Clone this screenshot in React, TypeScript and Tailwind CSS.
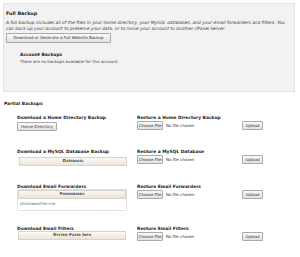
import React from 'react';

const font = "font-['DejaVu_Sans','Verdana',sans-serif]";

const SmallBtn = ({ label, className = '' }: { label: string; className?: string }) => (
  <button
    type="button"
    className={`flex h-[9px] items-center justify-center whitespace-nowrap rounded-[1px] border border-[#a9a9a9] bg-gradient-to-b from-[#fafafa] to-[#e2e2e2] px-[1px] text-[4px] leading-none text-[#333] ${className}`}
  >
    {label}
  </button>
);

const WideBtn = ({ label }: { label: string }) => (
  <div className="flex h-[9px] w-[108px] items-center justify-center border border-[#d8d2c8] bg-gradient-to-b from-[#fbf8f4] to-[#ebe4da] text-[4.3px] font-bold leading-none text-[#444] [font-variant:small-caps]">
    {label}
  </div>
);

const FileInput = () => (
  <div className="mt-[1px] flex items-center gap-[3px]">
    <SmallBtn label="Choose File" className="h-[8px] w-[26px] text-[4.2px]" />
    <span className="whitespace-nowrap text-[4px] text-[#333]">No file chosen</span>
  </div>
);

const Label = ({ children }: { children: React.ReactNode }) => (
  <p className="whitespace-nowrap text-[4.4px] font-bold leading-[5px] text-[#222]">{children}</p>
);

const rows = [
  { left: 'Download a Home Directory Backup', right: 'Restore a Home Directory Backup', kind: 'home', h: 'h-[34px]' },
  { left: 'Download a MySQL Database Backup', right: 'Restore a MySQL Database', kind: 'db', h: 'h-[35px]' },
  { left: 'Download Email Forwarders', right: 'Restore Email Forwarders', kind: 'fwd', h: 'h-[42px]' },
  { left: 'Download Email Filters', right: 'Restore Email Filters', kind: 'flt', h: 'h-[20px]' },
];

export default function App() {
  return (
    <div className={`h-[257px] w-[300px] overflow-hidden bg-white ${font} text-[#333]`}>
      <div className="ml-[3px] mt-[3px] h-[89px] w-[292px] border border-[#e2e2e2] bg-[#f2f2f2] px-[2px] pt-[7px]">
        <p className="text-[4.8px] font-bold leading-[5px] text-[#222]">Full Backup</p>
        <p className="mt-[4px] text-[4.4px] italic leading-[6px] text-[#444]">
          A full backup includes all of the files in your home directory, your MySQL databases, and your email forwarders and filters. You
          can back up your account to preserve your data, or to move your account to another cPanel server.
        </p>
        <SmallBtn label="Download or Generate a Full Website Backup" className="mt-[1px] h-[10px] w-[105px] text-[4.2px]" />
        <div className="ml-[14px] mt-[9px]">
          <p className="text-[4.4px] font-bold leading-[5px] text-[#222]">Account Backups</p>
          <p className="mt-[2px] text-[4.1px] leading-[5px] text-[#444]">There are no backups available for this account.</p>
        </div>
      </div>

      <p className="ml-[4px] mt-[9px] text-[4.4px] font-bold leading-[5px] text-[#222]">Partial Backups</p>

      <div className="ml-[17px] mt-[9px] flex flex-col">
        {rows.map((r) => (
          <div key={r.kind} className={`flex ${r.h}`}>
            <div className="w-[120px]">
              <Label>{r.left}</Label>
              {r.kind === 'home' && <SmallBtn label="Home Directory" className="mt-[2px] h-[9px] w-[40px]" />}
              {r.kind === 'db' && (
                <div className="ml-[2px] mt-[3px]">
                  <WideBtn label="Databases" />
                </div>
              )}
              {r.kind === 'fwd' && (
                <div className="w-[110px] border border-[#e0e0e0]">
                  <div className="flex justify-center">
                    <WideBtn label="Forwarders" />
                  </div>
                  <div className="h-[11px] px-[2px] pt-[2px] text-[4px] leading-[5px] text-[#5a6f80]">photoweather.me</div>
                </div>
              )}
              {r.kind === 'flt' && (
                <div className="flex w-[110px] justify-center">
                  <WideBtn label="System Filter Info" />
                </div>
              )}
            </div>
            <div className="w-[105px]">
              <Label>{r.right}</Label>
              <FileInput />
            </div>
            <div className="pt-[6px]">
              <SmallBtn label="Upload" className="h-[8px] w-[21px]" />
            </div>
          </div>
        ))}
      </div>
    </div>
  );
}
